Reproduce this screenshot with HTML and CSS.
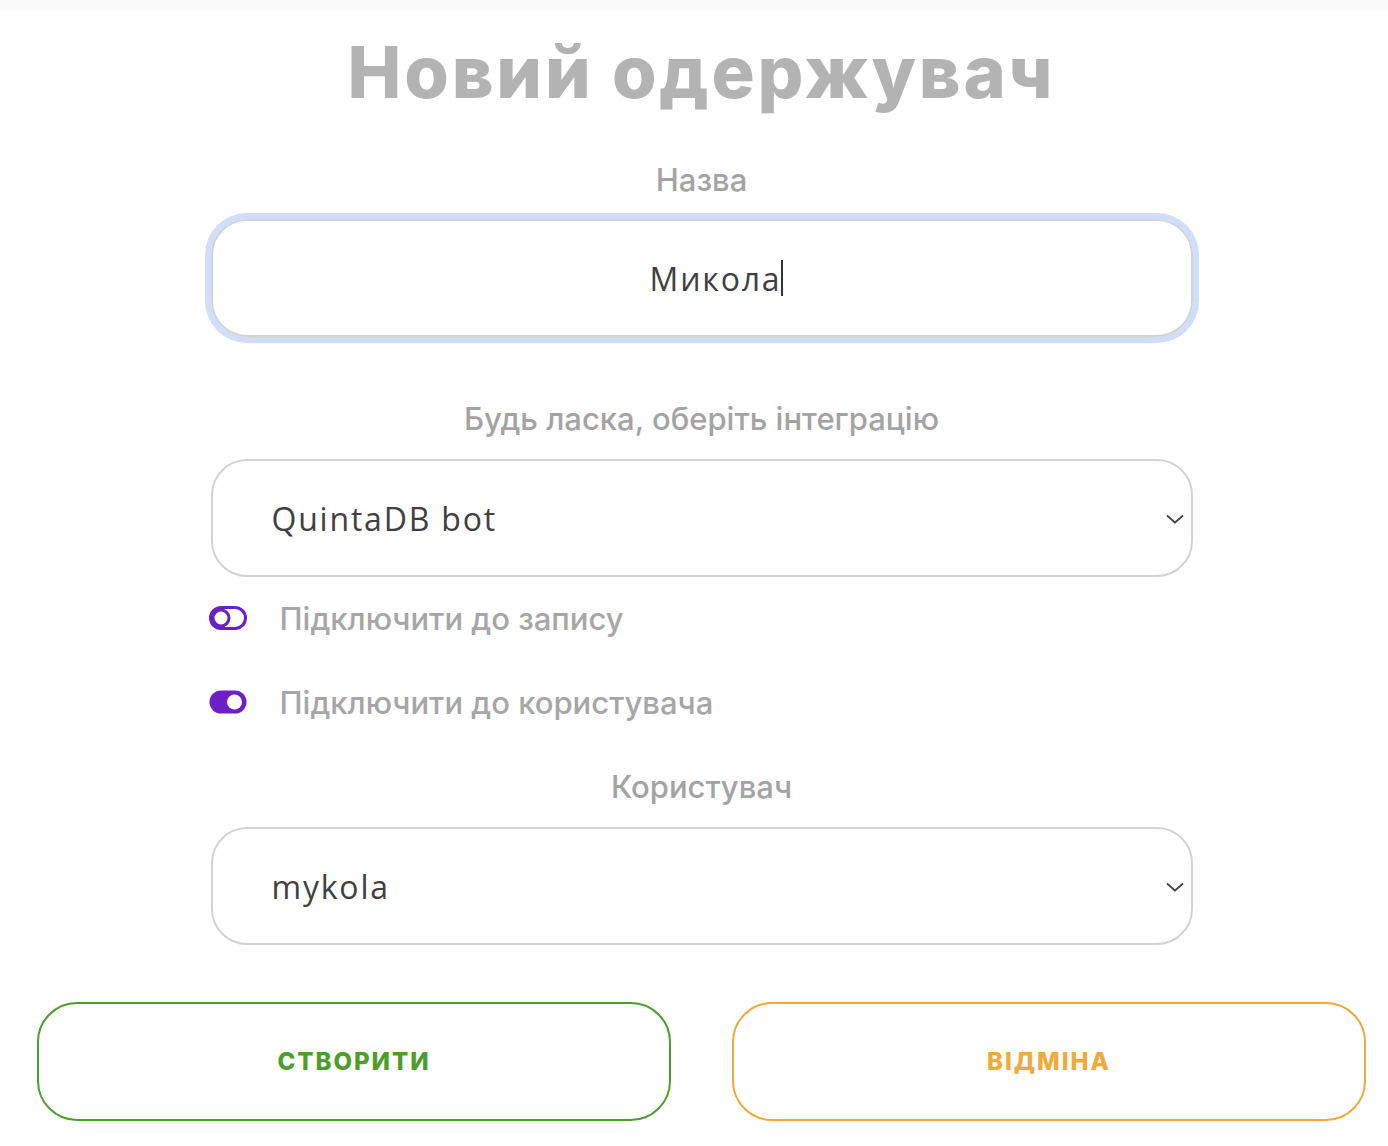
FILE: index.html
```html
<!DOCTYPE html>
<html lang="uk">
<head>
<meta charset="utf-8">
<title>Новий одержувач</title>
<link rel="stylesheet" href="styles.css">
</head>
<body>
<div class="topbar"></div>
<main class="page">
  <h1 class="title">Новий одержувач</h1>
  <form class="form">
    <label class="label">Назва</label>
    <div class="field field-focus"><span class="field-text">Микола</span><span class="caret"></span></div>

    <label class="label label-gap">Будь ласка, оберіть інтеграцію</label>
    <div class="field select"><span class="select-text">QuintaDB bot</span>
      <svg class="chevron" width="18" height="10" viewBox="0 0 18 10"><path d="M1 1.5 L9 8.5 L17 1.5" fill="none" stroke="#444" stroke-width="1.8"/></svg>
    </div>

    <div class="toggle-row first">
      <svg class="toggle" width="38" height="24" viewBox="0 0 38 24"><rect x="1.5" y="1.5" width="35" height="21" rx="10.5" fill="none" stroke="#6c1fc6" stroke-width="3"/><circle cx="12" cy="12" r="8" fill="none" stroke="#6c1fc6" stroke-width="3"/></svg>
      <span class="toggle-label">Підключити до запису</span>
    </div>
    <div class="toggle-row">
      <svg class="toggle" width="38" height="24" viewBox="0 0 38 24"><rect x="0.5" y="0.5" width="37" height="23" rx="11.5" fill="#6c1fc6"/><circle cx="25.5" cy="12" r="7.5" fill="#fff"/></svg>
      <span class="toggle-label">Підключити до користувача</span>
    </div>

    <label class="label label-gap2">Користувач</label>
    <div class="field select"><span class="select-text">mykola</span>
      <svg class="chevron" width="18" height="10" viewBox="0 0 18 10"><path d="M1 1.5 L9 8.5 L17 1.5" fill="none" stroke="#444" stroke-width="1.8"/></svg>
    </div>
  </form>
  <div class="buttons">
    <button class="btn btn-create" type="button">СТВОРИТИ</button>
    <button class="btn btn-cancel" type="button">ВІДМІНА</button>
  </div>
</main>
</body>
</html>
```
FILE: styles.css
```css
* { box-sizing: border-box; }
html, body { margin: 0; padding: 0; background: #fff; }
body { font-family: Inter, Roboto, "Liberation Sans", sans-serif; }

.topbar { height: 10px; background: #fafafa; }

.page {
  width: 1329px;
  margin-left: 37px;
  display: flex;
  flex-direction: column;
  align-items: center;
}

.title {
  margin: 26px 0 0;
  font-family: "Inter", "DejaVu Sans", sans-serif;
  font-weight: 800;
  font-size: 72px;
  line-height: 72px;
  color: #b3b3b3;
  letter-spacing: 2.8px;
  text-align: center;
}

.form {
  width: 982px;
  margin-top: 52px;
  display: flex;
  flex-direction: column;
}

.label {
  display: block;
  text-align: center;
  font-size: 31px;
  font-weight: 500;
  line-height: 40px;
  color: #a3a3a3;
}
.label-gap { margin-top: 62px; }
.label-gap2 { margin-top: 45px; }

.field {
  height: 118px;
  margin-top: 19px;
  border: 2px solid #d3d3d3;
  border-radius: 36px;
  display: flex;
  align-items: center;
  font-family: "Open Sans", "Noto Sans", sans-serif;
  font-size: 32px;
  letter-spacing: 1.8px;
  color: #404040;
}
.field-focus {
  justify-content: center;
  box-shadow: 0 0 0 6px #cfdefc;
  padding-left: 30px;
}
.caret {
  display: inline-block;
  width: 2px;
  height: 36px;
  background: #333;
}

.select {
  margin-top: 20px;
  padding: 0 7px 0 59px;
  justify-content: space-between;
}
.chevron { margin-top: 2px; }

.toggle-row {
  height: 40px;
  display: flex;
  align-items: center;
  margin-top: 44px;
}
.toggle-row.first { margin-top: 21px; }
.toggle { margin-left: -2px; flex: none; }
.toggle-label {
  margin-left: 33px;
  font-size: 31px;
  font-weight: 500;
  color: #a6a6a6;
}

.buttons {
  width: 1329px;
  margin-top: 57px;
  display: flex;
  gap: 61px;
}
.btn {
  flex: 1;
  height: 119px;
  background: #fff;
  border-radius: 40px;
  font-family: "Inter", "DejaVu Sans", sans-serif;
  font-weight: 800;
  font-size: 24px;
  letter-spacing: 2px;
  cursor: pointer;
}
.btn-create { border: 2px solid #4c9e2c; color: #4c9e2c; }
.btn-cancel { border: 2px solid #f0a93b; color: #f0a93b; }
```
